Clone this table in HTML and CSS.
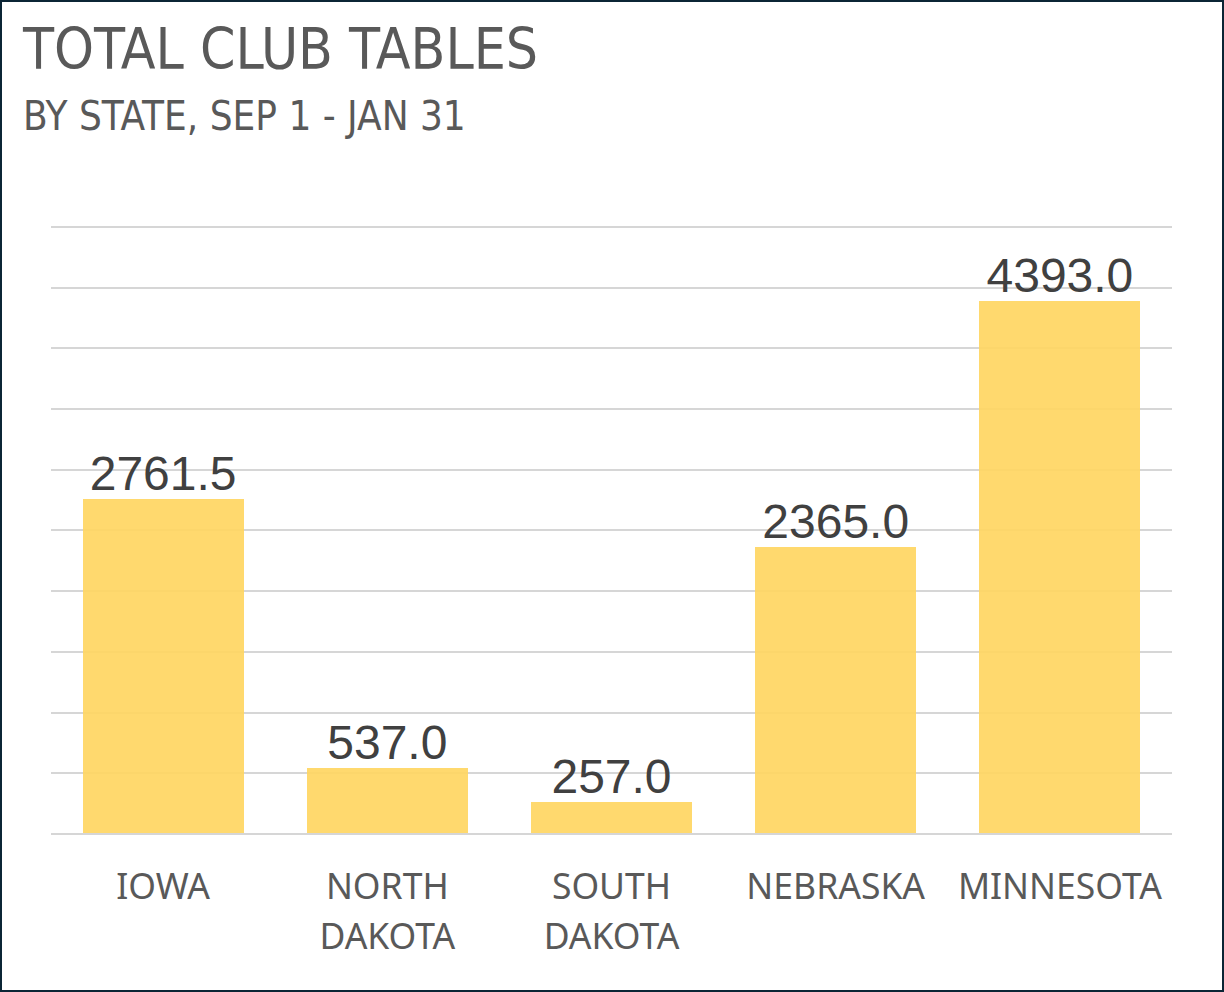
FILE: index.html
```html
<!DOCTYPE html>
<html lang="en">
<head>
<meta charset="utf-8">
<title>Total Club Tables</title>
<link rel="stylesheet" href="styles.css">
</head>
<body>
<div class="frame">
  <header class="head">
    <h1 class="title">TOTAL CLUB TABLES</h1>
    <p class="subtitle">BY STATE, SEP 1 - JAN 31</p>
  </header>
  <section class="chart">
    <div class="plot">
      <div class="grid">
        <i class="line"></i><i class="line"></i><i class="line"></i><i class="line"></i>
        <i class="line"></i><i class="line"></i><i class="line"></i><i class="line"></i>
        <i class="line"></i><i class="line"></i><i class="line"></i>
      </div>
      <div class="bars">
        <div class="col"><span class="val">2761.5</span><div class="bar" style="height:334px"></div></div>
        <div class="col"><span class="val">537.0</span><div class="bar" style="height:65px"></div></div>
        <div class="col"><span class="val">257.0</span><div class="bar" style="height:31px"></div></div>
        <div class="col"><span class="val">2365.0</span><div class="bar" style="height:286px"></div></div>
        <div class="col"><span class="val">4393.0</span><div class="bar" style="height:532px"></div></div>
      </div>
    </div>
    <div class="cats">
      <div class="cat">IOWA</div>
      <div class="cat">NORTH<br>DAKOTA</div>
      <div class="cat">SOUTH<br>DAKOTA</div>
      <div class="cat">NEBRASKA</div>
      <div class="cat">MINNESOTA</div>
    </div>
  </section>
</div>
</body>
</html>
```

FILE: styles.css
```css
* { box-sizing: border-box; }
html, body { margin: 0; padding: 0; background: #ffffff; }
.frame {
  width: 1224px;
  height: 992px;
  border: 2px solid #0b2535;
  background: #ffffff;
  padding: 16px 0 0 21px;
  overflow: hidden;
}
.head { margin: 0; }
.title {
  margin: 0;
  font-family: "DejaVu Sans Condensed", "DejaVu Sans", sans-serif;
  font-weight: 400;
  font-size: 56.5px;
  line-height: 64px;
  color: #595959;
}
.subtitle {
  margin: 12px 0 0 0;
  font-family: "DejaVu Sans Condensed", "DejaVu Sans", sans-serif;
  font-size: 40px;
  line-height: 44px;
  color: #595959;
}
.chart {
  margin: 88px 0 0 28px;
  width: 1121px;
}
.plot {
  display: grid;
  height: 609px;
}
.grid, .bars { grid-area: 1 / 1; }
.grid {
  display: flex;
  flex-direction: column;
  justify-content: space-between;
}
.line {
  display: block;
  height: 2px;
  background: #d6d6d6;
}
.bars {
  display: flex;
  align-items: flex-end;
  padding-bottom: 2px;
}
.col {
  flex: 1 1 0;
  display: flex;
  flex-direction: column;
  align-items: center;
  justify-content: flex-end;
}
.val {
  font-family: "Liberation Sans", Arial, sans-serif;
  font-size: 48px;
  line-height: 48px;
  color: #404040;
  margin-bottom: 1px;
}
.bar {
  width: 161px;
  background: rgba(255, 214, 98, 0.92);
}
.cats {
  display: flex;
  margin-top: 25px;
}
.cat {
  flex: 1 1 0;
  text-align: center;
  font-family: "Noto Sans", "Open Sans", sans-serif;
  font-size: 35.5px;
  line-height: 50px;
  color: #595959;
}
```
